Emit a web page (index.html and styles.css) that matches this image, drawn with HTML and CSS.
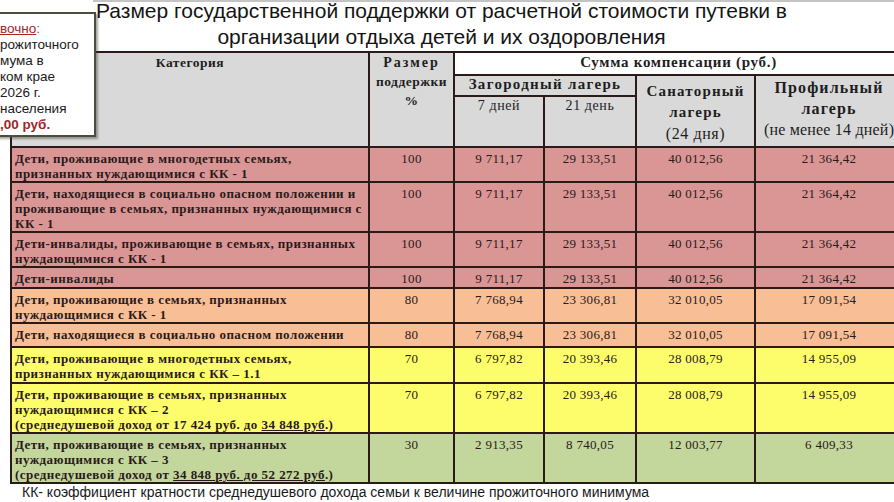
FILE: index.html
```html
<!DOCTYPE html>
<html lang="ru">
<head>
<meta charset="utf-8">
<link rel="stylesheet" href="styles.css">
</head>
<body>
<div class="page">
  <h1 class="title"><span class="title-text">Размер государственной поддержки от расчетной стоимости путевки в<br>организации отдыха детей и их оздоровления</span></h1>
  <table class="grid">
    <colgroup>
      <col class="c-cat"><col class="c-pct"><col class="c-d7"><col class="c-d21"><col class="c-san"><col class="c-prof">
    </colgroup>
    <thead>
      <tr class="h1">
        <th rowspan="3" class="h-cat">Категория</th>
        <th rowspan="3" class="h-pct"><span class="wide">Размер</span><br>поддержки<br>%</th>
        <th colspan="4" class="h-sum">Сумма компенсации (руб.)</th>
      </tr>
      <tr class="h2">
        <th colspan="2" class="h-zag">Загородный лагерь</th>
        <th rowspan="2" class="h-san">Санаторный<br>лагерь<br><span class="thin big">(24 дня)</span></th>
        <th rowspan="2" class="h-prof">Профильный<br>лагерь<br><span class="thin big">(не менее 14 дней)</span></th>
      </tr>
      <tr class="h3">
        <th class="h-day thin">7 дней</th>
        <th class="h-day thin">21 день</th>
      </tr>
    </thead>
    <tbody>
      <tr class="pink r35"><td class="cat">Дети, проживающие в многодетных семьях,<br>признанных нуждающимися с КК - 1</td><td>100</td><td>9 711,17</td><td>29 133,51</td><td>40 012,56</td><td>21 364,42</td></tr>
      <tr class="pink r50"><td class="cat">Дети, находящиеся в социально опасном положении и<br>проживающие в семьях, признанных нуждающимися с<br>КК - 1</td><td>100</td><td>9 711,17</td><td>29 133,51</td><td>40 012,56</td><td>21 364,42</td></tr>
      <tr class="pink r35"><td class="cat">Дети-инвалиды, проживающие в семьях, признанных<br>нуждающимися с КК - 1</td><td>100</td><td>9 711,17</td><td>29 133,51</td><td>40 012,56</td><td>21 364,42</td></tr>
      <tr class="pink r21"><td class="cat">Дети-инвалиды</td><td>100</td><td>9 711,17</td><td>29 133,51</td><td>40 012,56</td><td>21 364,42</td></tr>
      <tr class="peach r34"><td class="cat">Дети, проживающие в семьях, признанных<br>нуждающимися с КК - 1</td><td>80</td><td>7 768,94</td><td>23 306,81</td><td>32 010,05</td><td>17 091,54</td></tr>
      <tr class="peach r24"><td class="cat">Дети, находящиеся в социально опасном положении</td><td>80</td><td>7 768,94</td><td>23 306,81</td><td>32 010,05</td><td>17 091,54</td></tr>
      <tr class="yellow r36"><td class="cat">Дети, проживающие в многодетных семьях,<br>признанных нуждающимися с КК – 1.1</td><td>70</td><td>6 797,82</td><td>20 393,46</td><td>28 008,79</td><td>14 955,09</td></tr>
      <tr class="yellow r50"><td class="cat">Дети, проживающие в семьях, признанных<br>нуждающимися с КК – 2<br>(среднедушевой доход от 17 424 руб. до <span class="ul">34 848 руб</span>.)</td><td>70</td><td>6 797,82</td><td>20 393,46</td><td>28 008,79</td><td>14 955,09</td></tr>
      <tr class="green r50"><td class="cat">Дети, проживающие в семьях, признанных<br>нуждающимися с КК – 3<br>(среднедушевой доход от <span class="ul">34 848 руб. до 52 272 руб</span>.)</td><td>30</td><td>2 913,35</td><td>8 740,05</td><td>12 003,77</td><td>6 409,33</td></tr>
    </tbody>
  </table>
  <p class="note">КК- коэффициент кратности среднедушевого дохода семьи к величине прожиточного минимума</p>
  <div class="callout">
    <span class="ref">вочно</span><span class="colon">:</span><br>
    рожиточного<br>
    мума в<br>
    ком крае<br>
    2026 г.<br>
    населения<br>
    <b class="sum">,00 руб.</b>
  </div>
</div>
</body>
</html>
```

FILE: styles.css
```css
html, body {
  margin: 0;
  padding: 0;
  background: #ffffff;
}
body {
  width: 894px;
  height: 502px;
  overflow: hidden;
}
.page {
  position: relative;
  width: 894px;
  height: 502px;
  overflow: hidden;
}
.title {
  margin: 0 0 0 93px;
  border-top: 2px solid #c4c4c4;
  padding: 0 104px 0 0;
  height: 49px;
  font-family: "Liberation Sans", Arial, sans-serif;
  font-weight: normal;
  font-size: 21px;
  line-height: 26px;
  color: #141414;
  text-align: center;
  white-space: nowrap;
  overflow: visible;
}
.title-text {
  display: block;
  margin-top: -4px;
}
.grid {
  margin-left: 10px;
  width: 892px;
  table-layout: fixed;
  border-collapse: collapse;
  font-family: "Liberation Serif", "Times New Roman", serif;
  color: #2a1a1a;
  font-size: 13px;
}
.c-cat { width: 358px; }
.c-pct { width: 85px; }
.c-d7 { width: 90px; }
.c-d21 { width: 92px; }
.c-san { width: 119px; }
.c-prof { width: 148px; }

.grid th, .grid td {
  border: 2px solid #2b1a18;
  vertical-align: top;
  padding: 0;
  white-space: nowrap;
  overflow: hidden;
}
.grid th {
  background: #d9d9d9;
  font-weight: bold;
  font-size: 13.5px;
  letter-spacing: 0.5px;
  line-height: 19px;
  color: #1e1e1e;
  text-align: center;
}
.grid .thin { font-weight: normal; }
.h1 { height: 23px; }
.h2 { height: 21px; }
.h3 { height: 51px; }
.h-cat, .h-pct { padding-top: 2px; }
.grid .h-pct .wide { letter-spacing: 2px; font-size: 14px; }
.grid .h-sum { background: #ffffff; line-height: 19px; font-size: 15px; letter-spacing: 0.7px; }
.grid .h-zag { line-height: 17px; font-size: 15px; letter-spacing: 1.3px; }
.grid .h-day { font-size: 14px; line-height: 18px; letter-spacing: 0.6px; }
.grid .h-san { padding-top: 5px; line-height: 21px; font-size: 15px; letter-spacing: 1.2px; }
.grid .h-prof { padding-top: 1px; line-height: 21px; font-size: 16px; letter-spacing: 1.1px; }
.grid .h-san .big { font-size: 16px; letter-spacing: 0.6px; }
.grid .h-prof .big { font-size: 16px; letter-spacing: 0.2px; }

.grid td {
  font-size: 13px;
  line-height: 15px;
  padding-top: 3px;
  text-align: center;
  letter-spacing: 0.3px;
}
.grid td.cat {
  text-align: left;
  font-weight: bold;
  padding-left: 3px;
  letter-spacing: 0.45px;
}
.grid .ul { text-decoration: underline; }

.pink td { background: #d99694; }
.peach td { background: #f8be96; }
.yellow td { background: #fdfd6c; }
.green td { background: #c3d69c; }

.r35 { height: 35px; }
.r50 { height: 50px; }
.r21 { height: 21px; }
.r34 { height: 34px; }
.r24 { height: 24px; }
.r36 { height: 36px; }

.note {
  margin: 0 0 0 22px;
  font-family: "Liberation Sans", Arial, sans-serif;
  font-size: 14px;
  line-height: 16px;
  color: #1a1a1a;
  white-space: nowrap;
}

.callout {
  position: absolute;
  left: -4px;
  top: 12px;
  width: 94px;
  height: 114px;
  padding: 7px 0 0 2px;
  background: #ffffff;
  border: 2px solid #4d4d3f;
  box-shadow: 2px 2px 2px rgba(60, 60, 50, 0.45);
  font-family: "Liberation Sans", Arial, sans-serif;
  font-size: 13.5px;
  line-height: 16px;
  color: #1a1a1a;
  white-space: nowrap;
  overflow: hidden;
}
.callout .ref {
  color: #a3262a;
  text-decoration: underline;
  text-decoration-thickness: 1px;
}
.callout .colon { color: #666; }
.callout .sum { color: #a3262a; }
```
